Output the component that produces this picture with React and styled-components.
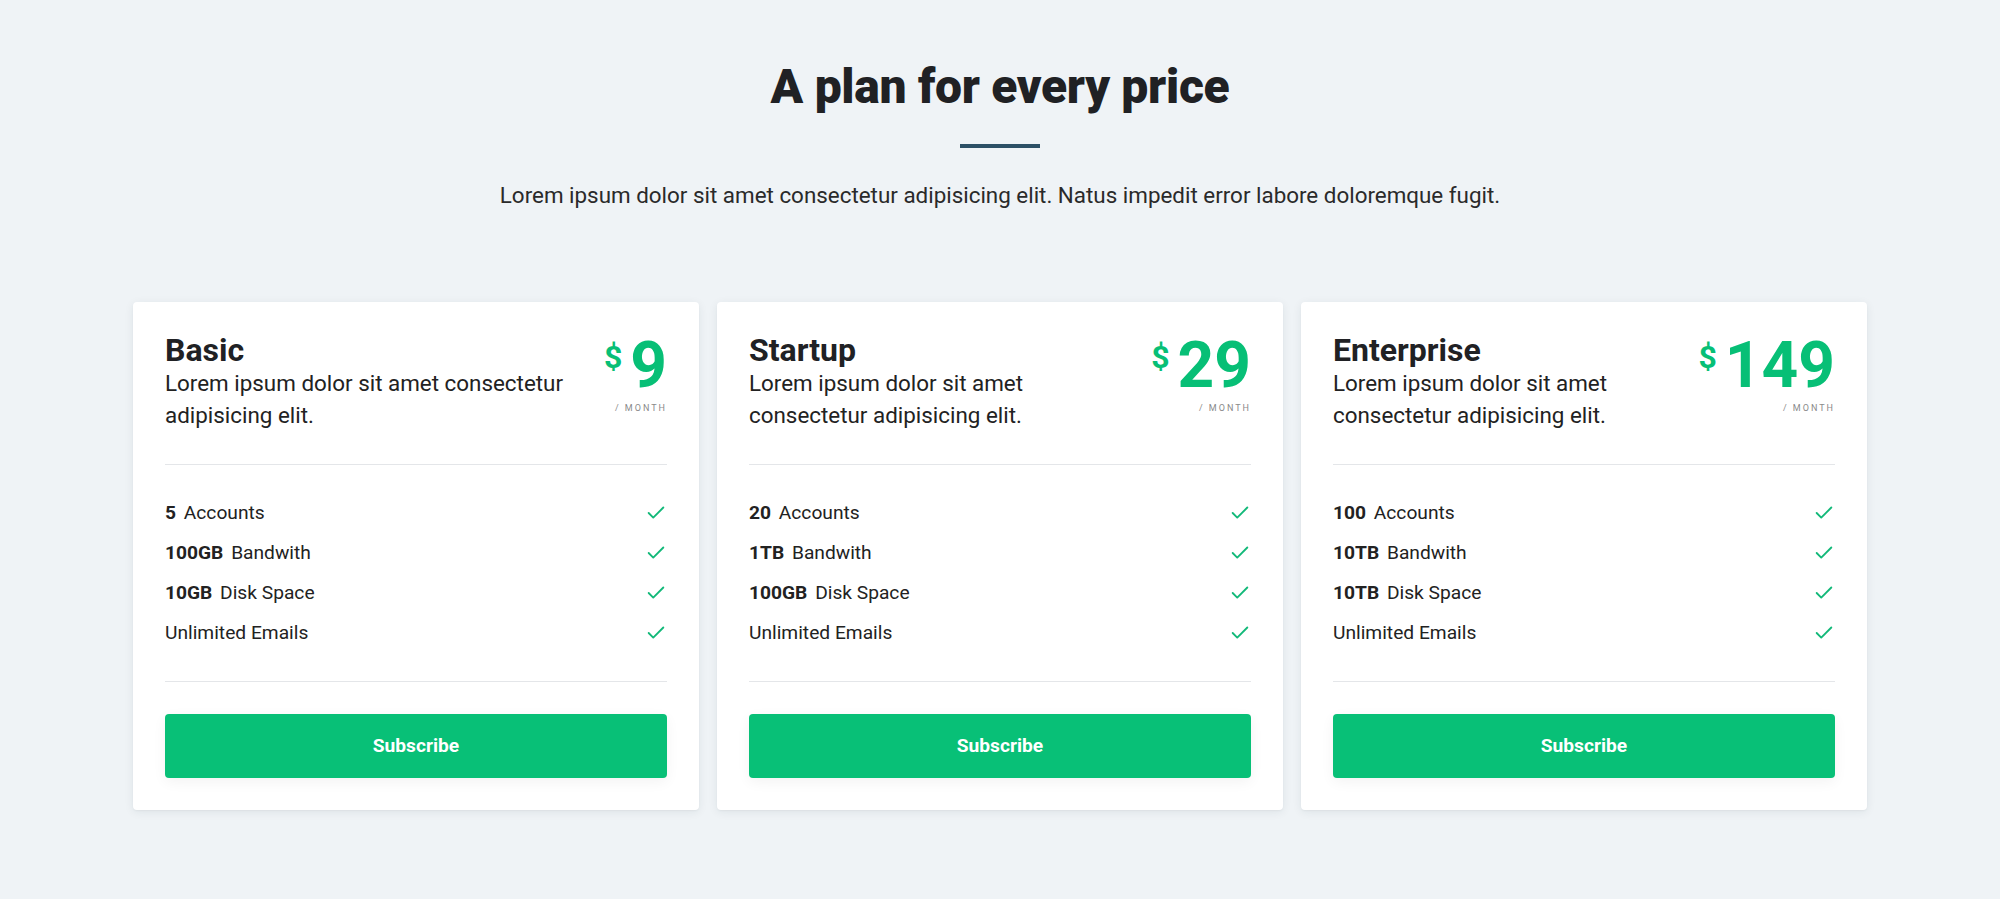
import React from "react";
import styled, { createGlobalStyle } from "styled-components";
import { Check } from "lucide-react";

const GlobalStyle = createGlobalStyle`
  * { box-sizing: border-box; }
  html, body { margin: 0; padding: 0; }
  body {
    background: #eff3f6;
    font-family: Roboto, "Liberation Sans", Arial, sans-serif;
    color: #212121;
  }
`;

const Page = styled.main`
  padding: 58px 0 80px;
  display: flex;
  flex-direction: column;
  align-items: center;
`;

const Heading = styled.h1`
  margin: 0;
  font-size: 48px;
  line-height: 1.2;
  font-weight: 900;
  letter-spacing: -0.3px;
  color: #202124;
  text-align: center;
`;

const Bar = styled.div`
  width: 80px;
  height: 4px;
  background: #2c5066;
  margin-top: 28px;
`;

const Lead = styled.p`
  margin: 32px 0 0;
  font-size: 22.4px;
  line-height: 1.4;
  color: #2a2a2a;
  text-align: center;
`;

const Grid = styled.section`
  margin-top: 91px;
  width: 1734px;
  display: grid;
  grid-template-columns: repeat(3, 1fr);
  gap: 18px;
`;

const Card = styled.article`
  background: #fff;
  border-radius: 4px;
  box-shadow: 0 2px 10px rgba(30, 50, 70, 0.08), 0 1px 2px rgba(0, 0, 0, 0.04);
  padding: 32px;
  display: flex;
  flex-direction: column;
`;

const CardHead = styled.header`
  display: flex;
  justify-content: space-between;
  align-items: flex-start;
  gap: 24px;
  padding-bottom: 33px;
  border-bottom: 1px solid #e4e6e9;
`;

const Info = styled.div`
  flex: 1;
  min-width: 0;
`;

const PlanName = styled.h2`
  margin: 0;
  font-size: 32px;
  line-height: 33px;
  font-weight: 700;
  color: #202124;
`;

const PlanText = styled.p`
  margin: 0;
  font-size: 22.4px;
  line-height: 32px;
  color: #222;
`;

const PriceBox = styled.div`
  display: flex;
  flex-direction: column;
  align-items: flex-end;
  flex-shrink: 0;
`;

const Amount = styled.div`
  display: flex;
  align-items: flex-start;
  color: #07bf76;
  font-weight: 700;
`;

const Currency = styled.span`
  font-size: 32px;
  line-height: 1;
  margin-top: 7px;
  margin-right: 8px;
`;

const Value = styled.span`
  font-size: 64px;
  line-height: 1;
`;

const Period = styled.span`
  margin-top: 4px;
  font-size: 9px;
  line-height: 1.5;
  letter-spacing: 2px;
  text-transform: uppercase;
  color: #8a8a8a;
`;

const Features = styled.ul`
  list-style: none;
  margin: 0;
  padding: 32px 0;
  display: flex;
  flex-direction: column;
  gap: 8px;
  border-bottom: 1px solid #e4e6e9;
`;

const Feature = styled.li`
  display: flex;
  align-items: center;
  justify-content: space-between;
  height: 32px;
  font-size: 19.2px;
  color: #222;
`;

const Qty = styled.b`
  font-weight: 700;
  margin-right: 3px;
`;

const Tick = styled(Check)`
  color: #12b979;
  flex-shrink: 0;
`;

const Subscribe = styled.button`
  margin-top: 32px;
  height: 64px;
  width: 100%;
  border: none;
  border-radius: 4px;
  background: #08c077;
  color: #fff;
  font-family: inherit;
  font-size: 19.2px;
  font-weight: 700;
  cursor: pointer;
  box-shadow: 0 4px 14px rgba(0, 0, 0, 0.05);
`;

const plans = [
  {
    name: "Basic",
    price: "9",
    features: [
      ["5", "Accounts"],
      ["100GB", "Bandwith"],
      ["10GB", "Disk Space"],
      [null, "Unlimited Emails"],
    ],
  },
  {
    name: "Startup",
    price: "29",
    features: [
      ["20", "Accounts"],
      ["1TB", "Bandwith"],
      ["100GB", "Disk Space"],
      [null, "Unlimited Emails"],
    ],
  },
  {
    name: "Enterprise",
    price: "149",
    features: [
      ["100", "Accounts"],
      ["10TB", "Bandwith"],
      ["10TB", "Disk Space"],
      [null, "Unlimited Emails"],
    ],
  },
];

export default function App() {
  return (
    <>
      <GlobalStyle />
      <Page>
        <Heading>A plan for every price</Heading>
        <Bar />
        <Lead>
          Lorem ipsum dolor sit amet consectetur adipisicing elit. Natus impedit error labore doloremque fugit.
        </Lead>
        <Grid>
          {plans.map((p) => (
            <Card key={p.name}>
              <CardHead>
                <Info>
                  <PlanName>{p.name}</PlanName>
                  <PlanText>Lorem ipsum dolor sit amet consectetur adipisicing elit.</PlanText>
                </Info>
                <PriceBox>
                  <Amount>
                    <Currency>$</Currency>
                    <Value>{p.price}</Value>
                  </Amount>
                  <Period>/ Month</Period>
                </PriceBox>
              </CardHead>
              <Features>
                {p.features.map(([q, label]) => (
                  <Feature key={label}>
                    <span>
                      {q && <Qty>{q}</Qty>} {label}
                    </span>
                    <Tick size={22} strokeWidth={2} />
                  </Feature>
                ))}
              </Features>
              <Subscribe>Subscribe</Subscribe>
            </Card>
          ))}
        </Grid>
      </Page>
    </>
  );
}
